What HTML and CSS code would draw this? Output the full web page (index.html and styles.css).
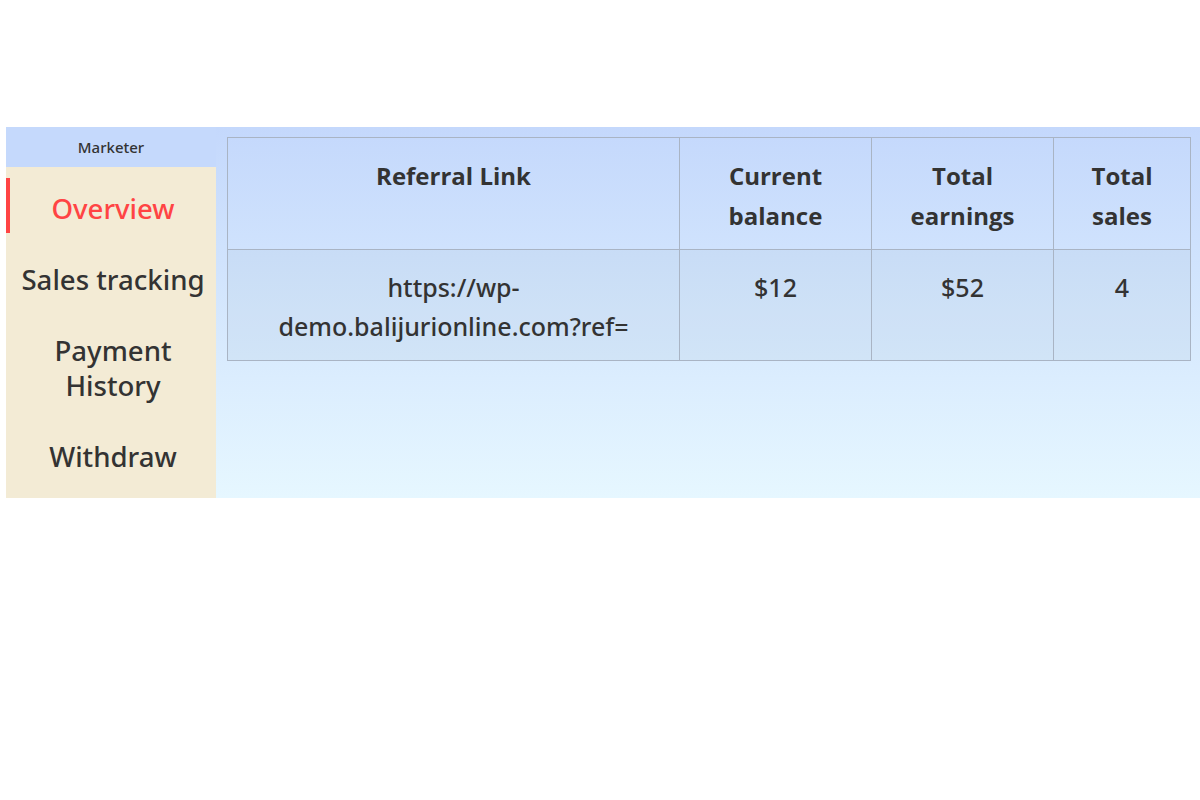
FILE: index.html
```html
<!DOCTYPE html>
<html>
<head>
<meta charset="utf-8">
<link rel="stylesheet" href="styles.css">
</head>
<body>
<div class="panel">
  <aside class="sidebar">
    <div class="side-title">Marketer</div>
    <nav class="side-nav">
      <a class="nav-item active">Overview</a>
      <a class="nav-item">Sales tracking</a>
      <a class="nav-item">Payment History</a>
      <a class="nav-item">Withdraw</a>
    </nav>
  </aside>
  <main class="content">
    <table class="stats">
      <thead>
        <tr>
          <th class="c-link">Referral Link</th>
          <th class="c-bal">Current balance</th>
          <th class="c-earn">Total earnings</th>
          <th class="c-sales">Total sales</th>
        </tr>
      </thead>
      <tbody>
        <tr>
          <td class="link-cell">https://wp-demo.balijurionline.com?ref=</td>
          <td>$12</td>
          <td>$52</td>
          <td>4</td>
        </tr>
      </tbody>
    </table>
  </main>
</div>
</body>
</html>
```

FILE: styles.css
```css
html, body {
  margin: 0;
  padding: 0;
  background: #ffffff;
}
body {
  font-family: "Open Sans", "Noto Sans", sans-serif;
  color: #333333;
  padding: 127px 0 0 6px;
}
.panel {
  display: flex;
  width: 1194px;
  height: 371px;
  background: linear-gradient(to bottom, #c4d8fc 0%, #e6f7ff 100%);
}
.sidebar {
  width: 210px;
  display: flex;
  flex-direction: column;
}
.side-title {
  height: 40px;
  display: flex;
  align-items: center;
  justify-content: center;
  font-family: "Noto Sans", sans-serif;
  font-size: 15px;
  font-weight: 500;
  color: #333;
  background: #c5d9fc;
}
.side-nav {
  flex: 1;
  background: #f3ebd5;
  display: flex;
  flex-direction: column;
  padding-top: 11px;
}
.nav-item {
  display: block;
  text-align: center;
  font-family: "Noto Sans", sans-serif;
  font-size: 27.6px;
  font-weight: 500;
  line-height: 35px;
  padding: 13px 2px 7px;
  margin-bottom: 16px;
  color: #333;
  border-left: 4px solid transparent;
}
.nav-item.active {
  color: #ff4444;
  border-left-color: #ff4444;
}
.content {
  flex: 1;
  padding: 10px 0 0 11px;
}
.stats {
  border-collapse: collapse;
  width: 964px;
}
.stats th, .stats td {
  border: 1px solid #a9b4c4;
  text-align: center;
  vertical-align: top;
  font-size: 24px;
  line-height: 40px;
  padding: 18px 16px 12px;
}
.stats th {
  font-weight: bold;
  height: 112px;
  box-sizing: border-box;
}
.stats td {
  height: 111px;
  box-sizing: border-box;
  font-family: "Noto Sans", sans-serif;
  font-size: 25px;
  font-weight: 500;
  line-height: 39px;
  background: rgba(160, 180, 200, 0.12);
}
.stats td.link-cell {
  padding-left: 40px;
  padding-right: 40px;
}
.c-link { width: 452px; }
.c-bal { width: 192px; }
.c-earn { width: 182px; }
.c-sales { width: 137px; }
```
